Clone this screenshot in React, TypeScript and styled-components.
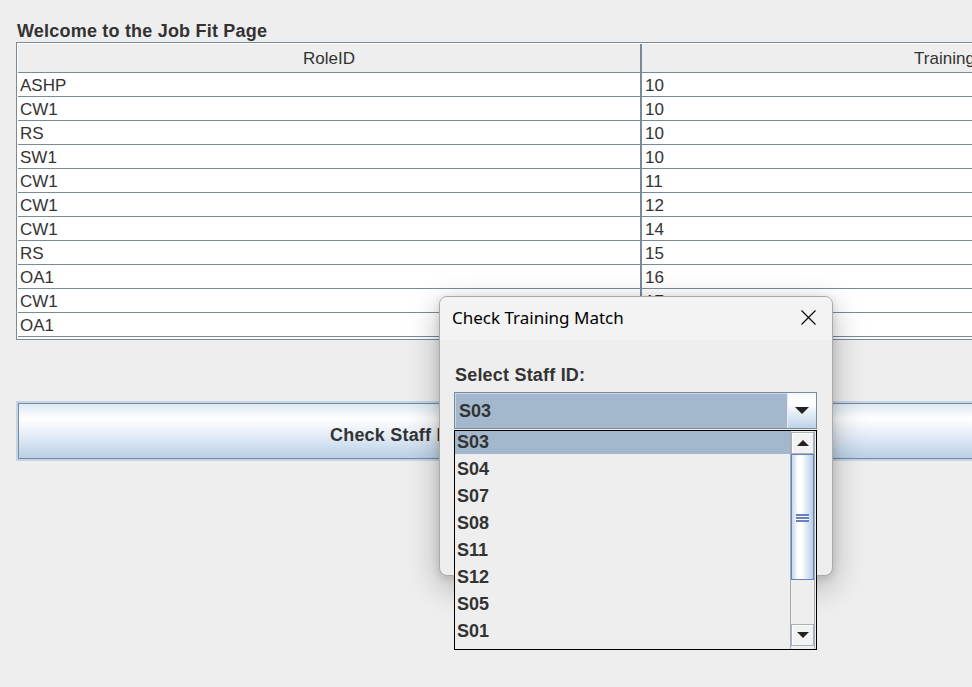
import React from "react";
import styled, { createGlobalStyle } from "styled-components";

const Global = createGlobalStyle`
  html, body { margin: 0; padding: 0; background: #eeeeee; overflow: hidden; }
  body { font-family: "Liberation Sans", Arial, sans-serif; }
  #root { width: 972px; height: 687px; }
`;

const Frame = styled.div`
  position: relative;
  width: 972px;
  height: 687px;
  overflow: hidden;
  background: #eeeeee;
  box-sizing: border-box;
  padding-left: 16px;
  display: flex;
  flex-direction: column;
  align-items: flex-start;
`;

const Heading = styled.h1`
  margin: 21px 0 0 1px;
  height: 21px;
  font: bold 18px/21px "Liberation Sans", Arial, sans-serif;
  letter-spacing: 0.2px;
  color: #333333;
  white-space: nowrap;
`;

const ScrollPane = styled.div`
  flex-shrink: 0;
  width: 1260px;
  height: 298px;
  box-sizing: border-box;
  border: 1px solid #7a8a99;
  padding: 1px;
  background: #ffffff;
  overflow: hidden;
`;

const HeaderRow = styled.div`
  display: grid;
  grid-template-columns: 624px 622px;
  grid-template-rows: 28px;
  height: 28px;
  border-bottom: 1px solid #7a8a99;
  background: #eeeeee;
`;

const HeaderCell = styled.div<{ $divider?: boolean }>`
  text-align: center;
  font: 17px/30px "Liberation Sans", Arial, sans-serif;
  color: #333333;
  white-space: nowrap;
  border-right: ${(p) => (p.$divider ? "2px solid #7a8a99" : "none")};
`;

const Row = styled.div`
  display: grid;
  grid-template-columns: 624px 622px;
  grid-template-rows: 23px;
  height: 23px;
  border-bottom: 1px solid #7a8a99;
`;

const Cell = styled.div<{ $divider?: boolean }>`
  height: 23px;
  box-sizing: border-box;
  padding-top: 1px;
  padding-left: ${(p) => (p.$divider ? "2px" : "3px")};
  font: 17px/24px "Liberation Sans", Arial, sans-serif;
  color: #333333;
  white-space: nowrap;
  border-right: ${(p) => (p.$divider ? "2px solid #7a8a99" : "none")};
`;

const ActionButton = styled.button`
  flex-shrink: 0;
  margin-top: 61px;
  width: 1260px;
  height: 60px;
  box-sizing: border-box;
  border: 2px solid #c3d5e9;
  box-shadow: inset 0 0 0 1px #7a8a99;
  background: linear-gradient(to bottom, #dde8f3 0%, #ffffff 28%, #e6eef7 55%, #b8cfe5 100%);
  display: flex;
  align-items: center;
  padding: 8px 0 0 312px;
  font: bold 18px "Liberation Sans", Arial, sans-serif;
  letter-spacing: 0.2px;
  color: #333333;
  white-space: nowrap;
`;

/* ---------- dialog window ---------- */

const Dialog = styled.div`
  position: absolute;
  left: 439px;
  top: 296px;
  width: 394px;
  height: 280px;
  box-sizing: border-box;
  border: 1px solid #aaaaaa;
  border-radius: 8px;
  background: #eeeeee;
  box-shadow: 0 10px 32px rgba(0, 0, 0, 0.28), 0 2px 8px rgba(0, 0, 0, 0.12);
  display: flex;
  flex-direction: column;
`;

const TitleBar = styled.div`
  height: 43px;
  flex-shrink: 0;
  box-sizing: border-box;
  background: #f3f3f3;
  border-radius: 7px 7px 0 0;
  display: flex;
  align-items: center;
  justify-content: space-between;
  padding: 0 16px 2px 12px;
`;

const TitleText = styled.span`
  font: 17px "Noto Sans", "Open Sans", sans-serif;
  color: #000000;
`;

const DialogBody = styled.div`
  flex: 1;
  padding: 24px 0 0 14px;
  border-radius: 0 0 7px 7px;
`;

const FieldLabel = styled.div`
  margin: 0 0 6px 1px;
  font: bold 18px/22px "Liberation Sans", Arial, sans-serif;
  letter-spacing: 0.2px;
  color: #333333;
`;

const Combo = styled.div`
  position: relative;
  width: 363px;
  height: 37px;
  box-sizing: border-box;
  border: 1px solid #7a8a99;
  display: flex;
`;

const ComboField = styled.div`
  flex: 1;
  background: #a3b8cc;
  box-shadow: inset 1px 1px 0 #c9d8e8;
  padding: 2px 0 0 4px;
  box-sizing: border-box;
  font: bold 18px/33px "Liberation Sans", Arial, sans-serif;
  color: #333333;
`;

const ComboArrow = styled.div`
  width: 28px;
  border-left: 1px solid #e4ebf3;
  background: linear-gradient(to bottom, #f4f8fc 0%, #ffffff 30%, #e3ecf6 60%, #bfd3e8 100%);
  display: flex;
  align-items: center;
  justify-content: center;
`;

const Popup = styled.div`
  position: absolute;
  left: -1px;
  top: 37px;
  z-index: 5;
  width: 363px;
  height: 220px;
  box-sizing: border-box;
  border: 1px solid #000000;
  background: #eeeeee;
  display: flex;
`;

const List = styled.div`
  flex: 1;
  display: flex;
  flex-direction: column;
  gap: 4px;
`;

const Item = styled.div<{ $selected?: boolean }>`
  height: 23px;
  padding-left: 2px;
  font: bold 18px/23px "Liberation Sans", Arial, sans-serif;
  color: #333333;
  background: ${(p) => (p.$selected ? "#a3b8cc" : "transparent")};
`;

const ScrollBar = styled.div`
  width: 25px;
  box-sizing: border-box;
  margin-right: 1px;
  border-left: 1px solid #a3acb5;
  border-right: 1px solid #a3acb5;
  padding: 1px 0 3px;
  display: flex;
  flex-direction: column;
`;

const ScrollButton = styled.div`
  height: 22px;
  flex-shrink: 0;
  box-sizing: border-box;
  border: 1px solid #a9b3bd;
  box-shadow: inset 1px 1px 0 #ffffff;
  background: #f2f2f2;
  display: flex;
  align-items: center;
  justify-content: center;
`;

const Thumb = styled.div`
  height: 126px;
  flex-shrink: 0;
  box-sizing: border-box;
  border: 1px solid #6382bf;
  background: linear-gradient(to right, #c6d8ec 0%, #ffffff 30%, #ffffff 45%, #dde8f3 70%, #b8cfe5 100%);
  display: flex;
  align-items: center;
  justify-content: center;
`;

const Grip = styled.div`
  width: 13px;
  height: 8px;
  margin-top: 2px;
  background: repeating-linear-gradient(to bottom, #6382bf 0 2px, #ffffff 2px 3px);
`;

const Track = styled.div`
  flex: 1;
  background: #eeeeee;
`;

const rows: [string, string][] = [
  ["ASHP", "10"],
  ["CW1", "10"],
  ["RS", "10"],
  ["SW1", "10"],
  ["CW1", "11"],
  ["CW1", "12"],
  ["CW1", "14"],
  ["RS", "15"],
  ["OA1", "16"],
  ["CW1", "17"],
  ["OA1", "18"],
];

const staff = ["S03", "S04", "S07", "S08", "S11", "S12", "S05", "S01"];

const Triangle = ({ up, w, h }: { up?: boolean; w: number; h: number }) => (
  <svg width={w} height={h} viewBox={`0 0 ${w} ${h}`}>
    <polygon points={up ? `0,${h} ${w},${h} ${w / 2},0` : `0,0 ${w},0 ${w / 2},${h}`} fill="#222222" />
  </svg>
);

const CloseIcon = () => (
  <svg width="15" height="15" viewBox="0 0 15 15">
    <path d="M0.5 0.5 L14.5 14.5 M14.5 0.5 L0.5 14.5" stroke="#000000" strokeWidth="1.1" fill="none" />
  </svg>
);

export default function App() {
  return (
    <>
      <Global />
      <Frame>
        <Heading>Welcome to the Job Fit Page</Heading>
        <ScrollPane>
          <HeaderRow>
            <HeaderCell $divider>RoleID</HeaderCell>
            <HeaderCell>TrainingID</HeaderCell>
          </HeaderRow>
          {rows.map(([role, training], i) => (
            <Row key={i}>
              <Cell $divider>{role}</Cell>
              <Cell>{training}</Cell>
            </Row>
          ))}
        </ScrollPane>
        <ActionButton>Check Staff Match</ActionButton>

        <Dialog>
          <TitleBar>
            <TitleText>Check Training Match</TitleText>
            <CloseIcon />
          </TitleBar>
          <DialogBody>
            <FieldLabel>Select Staff ID:</FieldLabel>
            <Combo>
              <ComboField>S03</ComboField>
              <ComboArrow>
                <Triangle w={14} h={7} />
              </ComboArrow>
              <Popup>
                <List>
                  {staff.map((s, i) => (
                    <Item key={s} $selected={i === 0}>
                      {s}
                    </Item>
                  ))}
                </List>
                <ScrollBar>
                  <ScrollButton>
                    <Triangle up w={12} h={6} />
                  </ScrollButton>
                  <Thumb>
                    <Grip />
                  </Thumb>
                  <Track />
                  <ScrollButton>
                    <Triangle w={12} h={6} />
                  </ScrollButton>
                </ScrollBar>
              </Popup>
            </Combo>
          </DialogBody>
        </Dialog>
      </Frame>
    </>
  );
}
